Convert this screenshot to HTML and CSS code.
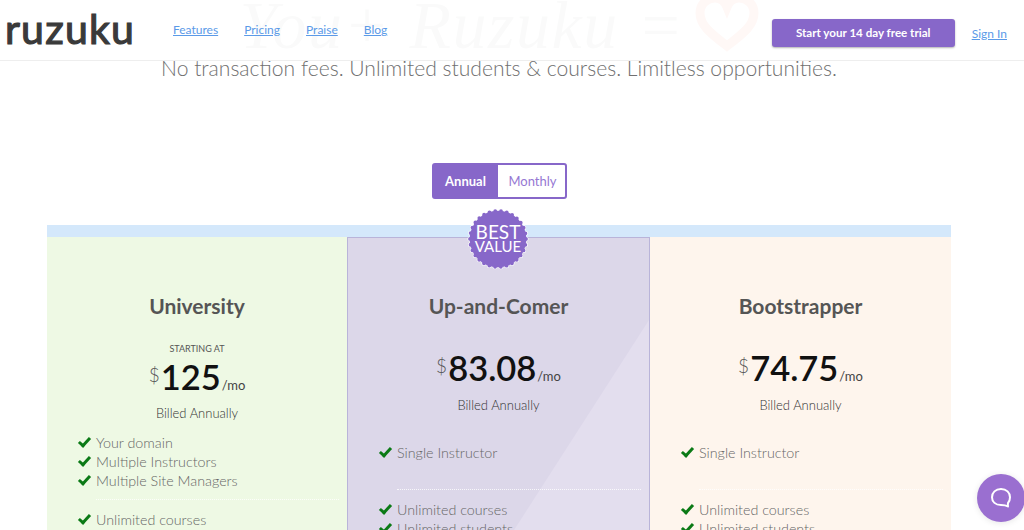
FILE: index.html
```html
<!DOCTYPE html>
<html>
<head>
  <meta charset="UTF-8">
  <meta name="viewport" content="width=device-width, initial-scale=1.0">
  <title>Ruzuku Pricing</title>
  <link rel="stylesheet" href="styles.css">
</head>
<body>
  <header class="site-header">
    <a class="logo" href="#">ruzuku</a>
    <nav class="main-nav">
      <a href="#">Features</a>
      <a href="#">Pricing</a>
      <a href="#">Praise</a>
      <a href="#">Blog</a>
    </nav>
    <a class="trial-btn" href="#">Start your 14 day free trial</a>
    <a class="sign-in" href="#">Sign In</a>
  </header>

  <main>
    <section class="hero">
      <h1>You+ Ruzuku = <svg class="heart" viewBox="0 0 64 52" width="64" height="52"><path d="M32 46 C15 33 5 25 5 13 C5 4 12 -2 20 -2 C26 -2 30 2 32 7 C34 2 38 -2 44 -2 C52 -2 59 4 59 13 C59 25 49 33 32 46 Z" fill="none" stroke="#f59f8f" stroke-width="9"/></svg></h1>
      <p>No transaction fees. Unlimited students &amp; courses. Limitless opportunities.</p>
    </section>

    <div class="billing-toggle">
      <span class="toggle-option active">Annual</span>
      <span class="toggle-option">Monthly</span>
    </div>

    <section class="pricing">
      <div class="pricing-bar"></div>
      <div class="badge">
        <svg viewBox="0 0 64 64" width="64" height="64">
          <circle cx="32" cy="32" r="28" fill="none" stroke="#fff" stroke-width="5" stroke-linecap="round" stroke-dasharray="0 5.860"/>
          <circle cx="32" cy="32" r="28" fill="none" stroke="#8767c9" stroke-width="3.800" stroke-linecap="round" stroke-dasharray="0 5.860"/>
          <circle cx="32" cy="32" r="28.300" fill="#8767c9"/>
        </svg>
        <span class="badge-text"><b>BEST</b><i>VALUE</i></span>
      </div>
      <div class="plans">
        <article class="plan plan-university">
          <h2>University</h2>
          <div class="starting">STARTING AT</div>
          <div class="price"><span class="cur">$</span><strong>125</strong><span class="per">/mo</span></div>
          <div class="billed">Billed Annually</div>
          <ul class="features">
            <li>Your domain</li>
            <li>Multiple Instructors</li>
            <li>Multiple Site Managers</li>
          </ul>
          <hr>
          <ul class="features">
            <li>Unlimited courses</li>
            <li>Unlimited students</li>
          </ul>
        </article>
        <article class="plan plan-comer">
          <h2>Up-and-Comer</h2>
          <div class="price"><span class="cur">$</span><strong>83.08</strong><span class="per">/mo</span></div>
          <div class="billed">Billed Annually</div>
          <ul class="features single">
            <li>Single Instructor</li>
          </ul>
          <hr>
          <ul class="features">
            <li>Unlimited courses</li>
            <li>Unlimited students</li>
          </ul>
        </article>
        <article class="plan plan-boot">
          <h2>Bootstrapper</h2>
          <div class="price"><span class="cur">$</span><strong>74.75</strong><span class="per">/mo</span></div>
          <div class="billed">Billed Annually</div>
          <ul class="features single">
            <li>Single Instructor</li>
          </ul>
          <hr>
          <ul class="features">
            <li>Unlimited courses</li>
            <li>Unlimited students</li>
          </ul>
        </article>
      </div>
    </section>
  </main>

  <a class="chat-btn" href="#">
    <svg viewBox="0 0 24 24" width="24" height="24"><path d="M12 3 C6.5 3 3 6.6 3 11.2 C3 15.8 6.5 19 12 19 C14 19 16.500 19 19 20.500 C18.700 19 18.800 18 19 17 C20.300 15.600 21 13.500 21 11.200 C21 6.600 17.500 3 12 3 Z" fill="none" stroke="#fff" stroke-width="2" stroke-linejoin="round"/></svg>
  </a>
</body>
</html>
```

FILE: styles.css
```css
html, body {
  height: 530px;
  overflow: hidden;
}
body {
  margin: 0;
  background: #fff;
  font-family: 'Lato', 'Liberation Sans', sans-serif;
  color: #555;
}

/* header sits over the hero, slightly see-through */
.site-header {
  position: absolute;
  top: 0;
  left: 0;
  right: 0;
  height: 60px;
  display: flex;
  align-items: center;
  padding: 0 17px 0 5px;
  background: rgba(255, 255, 255, 0.92);
  border-bottom: 1px solid #eee;
  z-index: 5;
}
.logo {
  font-size: 41px;
  font-weight: 400;
  line-height: 50px;
  letter-spacing: 1.200px;
  color: #3a3a3a;
  -webkit-text-stroke: 1.200px #3a3a3a;
  text-decoration: none;
  width: 168px;
  margin-top: -2px;
}
.main-nav {
  display: flex;
  gap: 26px;
  flex: 1;
  margin-top: -1px;
}
.main-nav a, .sign-in {
  color: #5b9ae8;
  font-size: 12px;
  text-decoration: underline;
}
.trial-btn {
  background: #8767c9;
  color: #fff;
  font-size: 11.600px;
  font-weight: 700;
  text-decoration: none;
  width: 183px;
  height: 28px;
  line-height: 28px;
  text-align: center;
  border-radius: 3px;
  box-shadow: 0 1px 2px rgba(0, 0, 0, 0.3);
  margin-right: 17px;
  margin-top: 6px;
}
.sign-in {
  margin-top: 6px;
}

main {
  width: 998px;
}
.hero {
  text-align: center;
}
.hero h1 {
  margin: 0;
  height: 56px;
  font-family: 'Liberation Serif', serif;
  font-style: italic;
  font-weight: 400;
  font-size: 68px;
  line-height: 50px;
  letter-spacing: 1.500px;
  white-space: nowrap;
  color: #b9bfbc;
  display: flex;
  justify-content: center;
  gap: 10px;
}
.hero p {
  margin: 0;
  font-size: 21.100px;
  font-weight: 300;
  line-height: 24px;
  color: #707070;
}

.billing-toggle {
  width: 135px;
  height: 36px;
  margin: 83px auto 0;
  display: flex;
  box-sizing: border-box;
  border: 2px solid #8767c9;
  border-radius: 3px;
  font-size: 13px;
}
.toggle-option {
  flex: 1;
  line-height: 32px;
  text-align: center;
  padding-left: 3px;
  color: #9678d3;
}
.toggle-option.active {
  flex: 0 0 64px;
  padding-left: 0;
  background: #8767c9;
  color: #fff;
  font-weight: 700;
}

.pricing {
  position: relative;
  width: 904px;
  margin: 26px 0 0 47px;
}
.pricing-bar {
  height: 12px;
  background: #d4e8fb;
}
.badge {
  position: absolute;
  top: -18px;
  left: 419px;
  width: 64px;
  height: 64px;
  z-index: 2;
}
.badge-text {
  position: absolute;
  top: 17px;
  left: 0;
  right: 0;
  text-align: center;
  color: #fff;
  line-height: 16px;
}
.badge-text b {
  display: block;
  font-size: 19px;
  font-weight: 400;
}
.badge-text i {
  display: block;
  font-style: normal;
  font-size: 15px;
  line-height: 13px;
}
.plans {
  display: grid;
  grid-template-columns: 300px 303px 301px;
}
.plan {
  position: relative;
  height: 500px;
  text-align: center;
  box-sizing: border-box;
  padding-top: 55px;
}
.plan-university { background: #eef9e4; }
.plan-comer {
  background: #dcd7e9;
  border-left: 1px solid #b9b4d9;
  border-right: 1px solid #b9b4d9;
  border-top: 1px solid #b9b4d9;
  padding-top: 54px;
}
.plan-comer::before {
  content: "";
  position: absolute;
  top: 82px;
  left: 0;
  right: 0;
  height: 400px;
  background: #e3deee;
  clip-path: polygon(100% 0, 100% 100%, 44px 100%);
}
.plan-boot { background: #fef5ed; }
.plan > * {
  position: relative;
}
.plan h2 {
  margin: 0;
  font-size: 21px;
  line-height: 28px;
  font-weight: 700;
  color: #555;
}
.starting {
  margin-top: 23px;
  font-size: 9px;
  line-height: 12px;
  color: #555;
}
.price {
  margin-top: 24px;
  height: 44px;
  line-height: 44px;
  color: #111;
}
.plan-university .price {
  margin-top: -2px;
}
.price strong {
  font-size: 34.500px;
  font-weight: 600;
}
.cur {
  font-size: 19px;
  font-weight: 300;
  color: #555;
  vertical-align: 8px;
  margin-right: 1px;
}
.per {
  font-size: 13px;
  color: #444;
  margin-left: 1px;
}
.billed {
  margin-top: 8px;
  font-size: 13px;
  line-height: 18px;
  font-weight: 300;
  color: #333;
}
.plan-university .billed {
  margin-top: 7px;
}
.features {
  list-style: none;
  margin: 11px 0 0;
  padding: 0 0 0 49px;
  text-align: left;
  font-size: 14.300px;
  font-weight: 300;
  line-height: 19px;
  color: #666;
}
.features.single {
  margin-top: 29px;
  height: 37px;
}
.features li {
  position: relative;
}
.features li::before {
  content: "";
  position: absolute;
  left: -15px;
  top: 2px;
  width: 4px;
  height: 9px;
  border: solid #0b7a16;
  border-width: 0 3px 3px 0;
  transform: rotate(42deg);
}
.plan hr {
  border: 0;
  border-top: 1px dotted rgba(255, 255, 255, 0.8);
  margin: 9px 8px 10px 49px;
}
.plan hr + .features {
  margin-top: 0;
}

.chat-btn {
  position: fixed;
  right: -1px;
  bottom: 8px;
  width: 48px;
  height: 48px;
  border-radius: 50%;
  background: #9a6fd0;
  display: flex;
  align-items: center;
  justify-content: center;
  box-shadow: 0 1px 6px rgba(0, 0, 0, 0.1);
  z-index: 6;
}
```
